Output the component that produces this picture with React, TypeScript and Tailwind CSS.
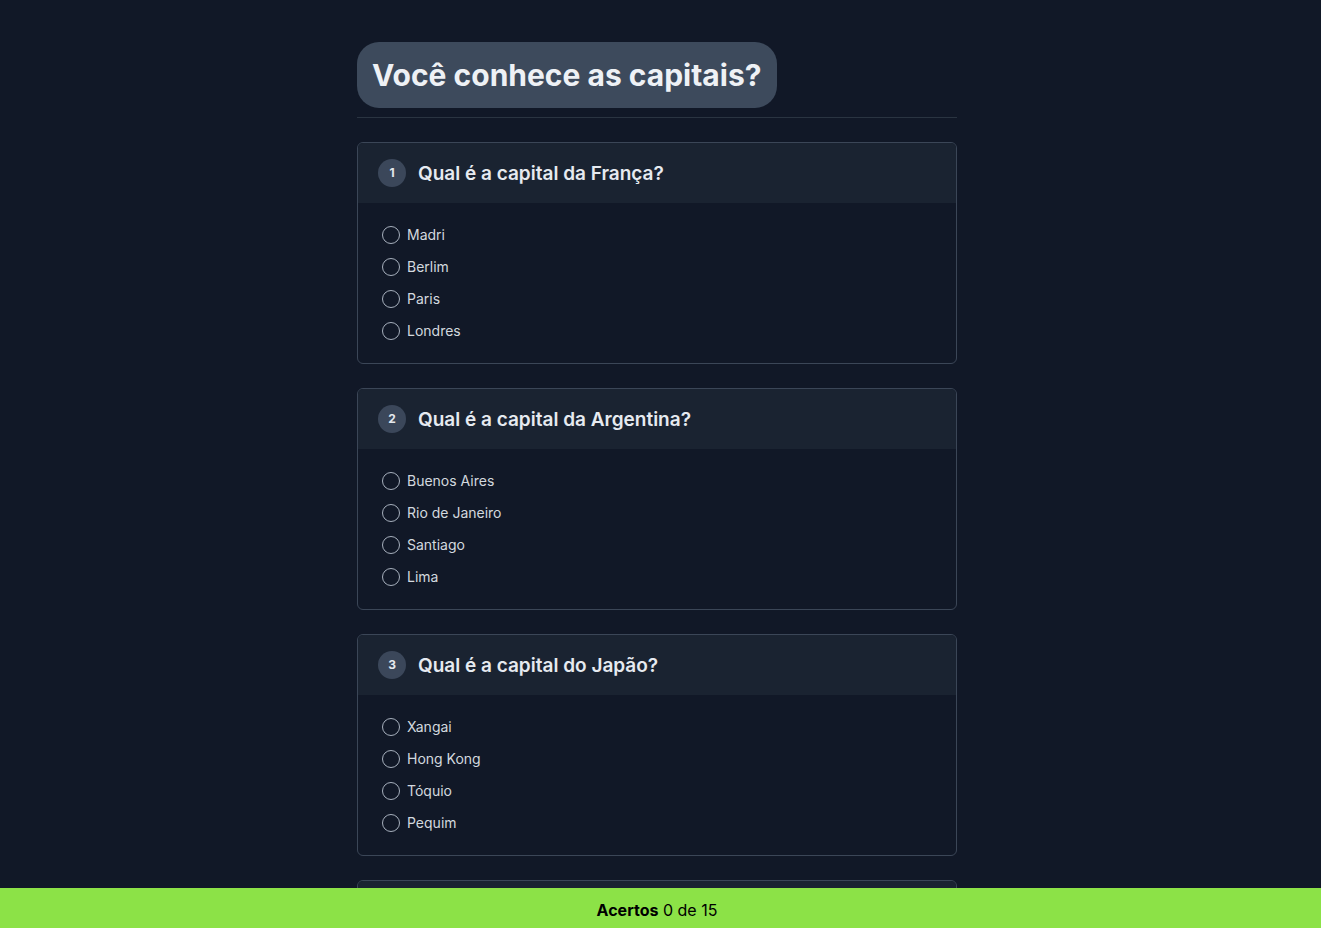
const questions = [
  { q: 'Qual é a capital da França?', options: ['Madri', 'Berlim', 'Paris', 'Londres'] },
  { q: 'Qual é a capital da Argentina?', options: ['Buenos Aires', 'Rio de Janeiro', 'Santiago', 'Lima'] },
  { q: 'Qual é a capital do Japão?', options: ['Xangai', 'Hong Kong', 'Tóquio', 'Pequim'] },
  { q: 'Qual é a capital da Austrália?', options: ['Sydney', 'Camberra', 'Melbourne', 'Perth'] },
]

const App = () => {
  return (
    <div className="min-h-screen bg-[#111827] font-['Inter',sans-serif] pb-16 pr-[7px]">
      <div className="mx-auto w-[600px] pt-[42px]">
        <div className="border-b border-[#2a3441] pb-[9px]">
          <h1 className="inline-block rounded-[22px] bg-[#3d4a5c] px-[15px] h-[66px] leading-[66px] text-[30px] font-bold text-[#eef1f5]">
            Você conhece as capitais?
          </h1>
        </div>
        <div className="mt-6 flex flex-col gap-6">
          {questions.map((item, i) => (
            <div key={i} className="rounded-md border border-[#3b4657] overflow-hidden">
              <div className="flex h-[60px] items-center gap-3 bg-[#1a2331] px-5">
                <span className="flex h-7 w-7 items-center justify-center rounded-full bg-[#3b475a] text-xs font-bold text-[#e5e9ef]">
                  {i + 1}
                </span>
                <h2 className="text-[19px] leading-7 font-semibold text-[#e6eaf0] mt-[1px]">{item.q}</h2>
              </div>
              <div className="flex flex-col px-6 py-4">
                {item.options.map((opt) => (
                  <label key={opt} className="flex h-8 items-center gap-[7px] text-sm text-[#d3d8df]">
                    <span className="h-[18px] w-[18px] rounded-full border-[1.5px] border-[#a7b0bd]" />
                    {opt}
                  </label>
                ))}
              </div>
            </div>
          ))}
        </div>
      </div>
      <div className="fixed bottom-0 left-0 right-0 flex h-10 items-center justify-center bg-[#8ce247] pr-[7px] pt-1 text-base text-black">
        <span className="font-bold">Acertos</span>&nbsp;0 de 15
      </div>
    </div>
  )
}

export default App
